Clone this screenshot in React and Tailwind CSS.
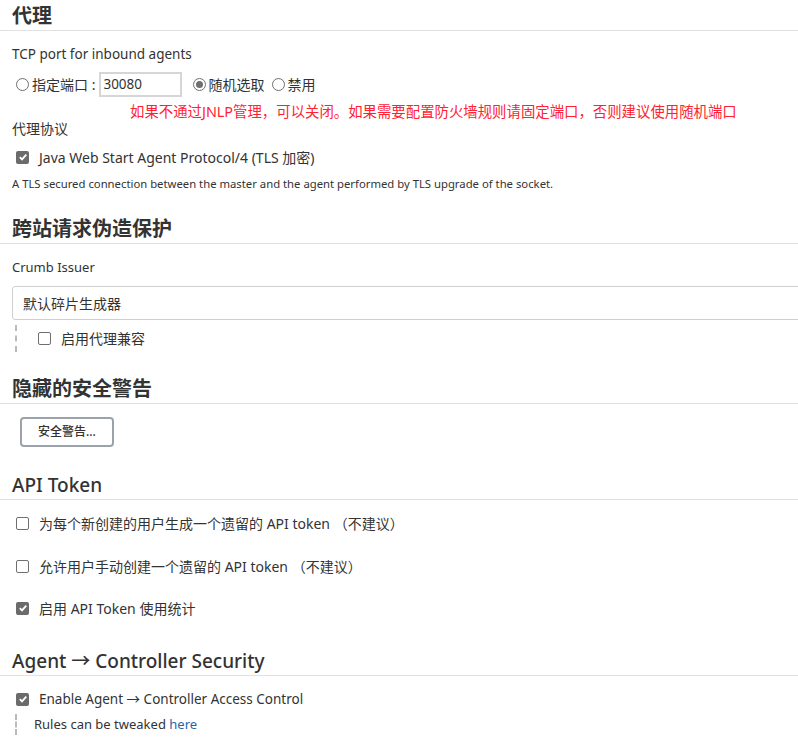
import React from 'react'

const FONT = { fontFamily: '"Noto Sans", "Noto Sans CJK SC", sans-serif' }

function Box({ checked }) {
  if (checked) {
    return (
      <span className="w-[13px] h-[13px] rounded-[2px] bg-[#6b6b6b] flex items-center justify-center shrink-0">
        <svg width="10" height="10" viewBox="0 0 10 10">
          <path d="M1.8 5.2 L4 7.4 L8.3 2.6" fill="none" stroke="#fff" strokeWidth="1.8" />
        </svg>
      </span>
    )
  }
  return <span className="w-[13px] h-[13px] rounded-[2px] border border-[#6f6f6f] bg-white shrink-0" />
}

function Radio({ checked }) {
  return (
    <span className="w-[13px] h-[13px] rounded-full border border-[#6f6f6f] bg-white flex items-center justify-center shrink-0">
      {checked && <span className="w-[7px] h-[7px] rounded-full bg-[#6f6f6f]" />}
    </span>
  )
}

// section title with the thin rule under it
function Heading({ children, bold }) {
  return (
    <div className={`pl-3 pb-[2px] border-b border-[#e1e1e1] text-[#333] ${bold ? 'text-[20px] font-bold' : 'text-[19px] font-medium'} leading-[24px]`}>
      {children}
    </div>
  )
}

function CheckRow({ checked, children, className = '', size = 'text-[14px]' }) {
  return (
    <div className={`flex items-center h-[20px] pl-4 ${size} text-[#333] ${className}`}>
      <Box checked={checked} />
      <span className="ml-[10px]">{children}</span>
    </div>
  )
}

export default function App() {
  return (
    <div className="w-full min-h-[745px] overflow-hidden bg-white" style={FONT}>
      <div className="w-[860px] pt-[4px]">
        <Heading bold>代理</Heading>

        <div className="pl-3 mt-[14px] text-[13.5px] leading-[18px] text-[#333]">TCP port for inbound agents</div>

        <div className="flex items-center h-[25px] pl-4 mt-[9px] text-[14px] text-[#333]">
          <Radio />
          <span className="ml-[3px]">指定端口 :</span>
          <div className="ml-[4px] w-[83px] h-[25px] border-2 border-[#d6d6d6] flex items-center pl-[2px] text-[13.5px]">30080</div>
          <span className="ml-[11px]"><Radio checked /></span>
          <span className="ml-[2px]">随机选取</span>
          <span className="ml-[8px]"><Radio /></span>
          <span className="ml-[2px]">禁用</span>
        </div>

        <div className="pl-[130px] mt-[7px] text-[14.4px] leading-[16px] text-[#f23]">
          如果不通过JNLP管理，可以关闭。如果需要配置防火墙规则请固定端口，否则建议使用随机端口
        </div>

        <div className="pl-3 text-[14px] leading-[18px] text-[#333]">代理协议</div>

        <CheckRow checked className="mt-[9px]">Java Web Start Agent Protocol/4 (TLS 加密)</CheckRow>

        <div className="pl-3 mt-[9px] text-[11.3px] leading-[16px] text-[#333]">
          A TLS secured connection between the master and the agent performed by TLS upgrade of the socket.
        </div>

        <div className="mt-[25px]">
          <Heading bold>跨站请求伪造保护</Heading>
        </div>

        <div className="pl-3 mt-[14px] text-[13px] leading-[18px] text-[#333]">Crumb Issuer</div>

        <div className="ml-3 mt-[10px] h-[34px] border border-[#cfcfcf] rounded-l-[3px] flex items-center pl-[10px] text-[14px] text-[#333]">
          默认碎片生成器
        </div>

        <div className="ml-[15px] mt-[5px] h-[27px] border-l-2 border-dashed border-[#bbb] flex items-center">
          <CheckRow className="pl-[21px]">启用代理兼容</CheckRow>
        </div>

        <div className="mt-[25px]">
          <Heading bold>隐藏的安全警告</Heading>
        </div>

        <div className="pl-5 mt-[13px]">
          <button className="w-[94px] h-[30px] border-2 border-[#9aa3ab] rounded-[4px] bg-white text-[12px] font-medium text-[#333]">
            安全警告...
          </button>
        </div>

        <div className="mt-[26px]">
          <Heading>API Token</Heading>
        </div>

        <CheckRow className="mt-[13px]">为每个新创建的用户生成一个遗留的 API token （不建议）</CheckRow>
        <CheckRow className="mt-[23px]">允许用户手动创建一个遗留的 API token （不建议）</CheckRow>
        <CheckRow checked className="mt-[22px]">启用 API Token 使用统计</CheckRow>

        <div className="mt-[31px]">
          <Heading>Agent → Controller Security</Heading>
        </div>

        <CheckRow checked className="mt-[13px]" size="text-[13.5px]">Enable Agent → Controller Access Control</CheckRow>

        <div className="ml-[15px] mt-[5px] border-l-2 border-dashed border-[#bbb] pl-[17px] h-[21px] flex items-center text-[13px] text-[#333]">
          Rules can be tweaked&nbsp;<span className="text-[#2468a9]">here</span>
        </div>
      </div>
    </div>
  )
}
